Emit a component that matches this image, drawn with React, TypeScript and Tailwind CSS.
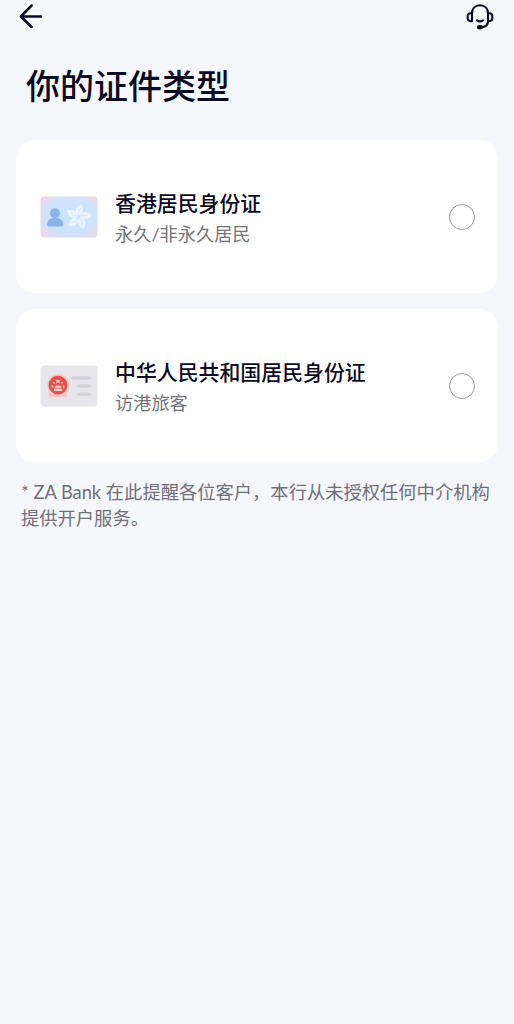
import React, { useState } from 'react';

interface DocumentType {
  id: string;
  title: string;
  subtitle: string;
  icon: React.ReactNode;
}

const BackIcon = () => (
  <svg className="w-6 h-6" viewBox="0 0 24 24" fill="none" stroke="#0b0b23" strokeWidth="2.5" strokeLinecap="round" strokeLinejoin="round">
    <path d="M12.6 1.5 L1.8 12.5 L12.6 23 M1.8 12.5 H22" />
  </svg>
);

const SupportIcon = () => (
  <svg className="w-7 h-7" viewBox="0 0 28 28" fill="none" stroke="#0b0b23" strokeWidth="2.1" strokeLinecap="round" strokeLinejoin="round">
    <path d="M6 18.3 V10.5 C6 5.5 9.2 2.2 14 2.2 S22 5.5 22 10.5 V18.3 C22 22 19.5 24.1 15.5 24.3" />
    <path d="M6 10.2 H4.8 C2.8 10.2 1.7 11.3 1.7 12.8 V15.6 C1.7 17.4 3 18.3 6 18.3 M22 10.2 H23.2 C25.2 10.2 26.3 11.3 26.3 12.8 V15.6 C26.3 17.4 25 18.3 22 18.3" />
    <path d="M11 17.4 Q14 19.4 17 17.4" />
    <ellipse cx="14" cy="24.3" rx="2" ry="1.2" fill="#0b0b23" />
  </svg>
);

const HongKongCard = () => (
  <svg className="w-[58px] h-[42px]" viewBox="0 0 58 42">
    <defs>
      <radialGradient id="hk-bg" cx="0.52" cy="0.5" r="0.68">
        <stop offset="0" stopColor="#cae5ff" />
        <stop offset="0.65" stopColor="#cfe2fd" />
        <stop offset="1" stopColor="#f6d6e5" />
      </radialGradient>
    </defs>
    <rect x="0.5" y="0.5" width="57" height="41" rx="3.5" fill="url(#hk-bg)" />
    <circle cx="15" cy="17.3" r="5" fill="#8bb5e9" />
    <path d="M7 28.4 C7 24.8 9.6 22.6 12.5 22 H17.7 C20.8 22.6 23.4 24.8 23.4 28.4 C23.4 29.8 22.3 30.4 21 30.4 H9.4 C8 30.4 7 29.8 7 28.4Z" fill="#8bb5e9" />
    {/* five bauhinia petals round the centre */}
    {[8, 80, 152, 224, 296].map((angle) => (
      <g key={angle} transform={`translate(38.5 20.8) rotate(${angle})`}>
        <path d="M0 -1.2 C-5 -3.5 -5.2 -9.8 1.8 -13.2 C1.2 -11 5 -8.8 3.2 -5 C2.4 -3 1 -2 0 -1.2Z" fill="#eaf4ff" />
        <path d="M0 -2 C-1.4 -4.5 -1 -6.5 0.8 -8.6" fill="none" stroke="#cce2fb" strokeWidth="0.7" />
      </g>
    ))}
  </svg>
);

const MainlandCard = () => (
  <svg className="w-[58px] h-[42px]" viewBox="0 0 58 42">
    <rect x="0.5" y="0.5" width="57" height="41" rx="3.5" fill="#e6e6ec" />
    <circle cx="18" cy="20" r="11" fill="#ffc5bd" />
    <path d="M9 25 L8.6 31 Q11 33.5 14 31.6 Q18 34 22 31.6 Q25 33.5 27.4 31 L27 25Z" fill="#ffc5bd" />
    <circle cx="18" cy="20.2" r="9.4" fill="#dc5451" />
    <g fill="#ffcfc5">
      <path d="M18 13.8 L18.8 15.6 L20.8 15.6 L19.2 16.8 L19.9 18.6 L18 17.5 L16.1 18.6 L16.8 16.8 L15.2 15.6 L17.2 15.6Z" />
      <circle cx="12.4" cy="21.4" r="1" />
      <circle cx="14" cy="17.8" r="0.9" />
      <circle cx="22" cy="17.8" r="0.9" />
      <circle cx="23.6" cy="21.4" r="1" />
      <path d="M16 20.4 H20 L21.4 22.8 H14.6Z M14.4 23.6 H21.6 L22.4 26 H13.6Z" />
    </g>
    <g stroke="#d3d3dd" strokeWidth="3.6" strokeLinecap="round">
      <path d="M33 13 H49.5 M38.8 21 H49.5 M38.8 29.2 H49.5" />
    </g>
  </svg>
);

const documentTypes: DocumentType[] = [
  { id: 'hk', title: '香港居民身份证', subtitle: '永久/非永久居民', icon: <HongKongCard /> },
  { id: 'cn', title: '中华人民共和国居民身份证', subtitle: '访港旅客', icon: <MainlandCard /> },
];

interface DocumentCardProps {
  item: DocumentType;
  selected: boolean;
  onSelect: (id: string) => void;
}

const DocumentCard: React.FC<DocumentCardProps> = ({ item, selected, onSelect }) => (
  <button
    onClick={() => onSelect(item.id)}
    className="flex items-center w-full h-[153px] pl-6 pr-[23px] rounded-[19px] bg-white text-left"
  >
    {item.icon}
    <div className="flex-1 ml-[17px] pt-1">
      <div className="text-[20.9px] leading-[31px] font-medium text-[#0b0b23]">{item.title}</div>
      <div className="text-[18.2px] leading-[33px] text-[#74747c]">{item.subtitle}</div>
    </div>
    <span className={`w-[26px] h-[26px] rounded-full border ${selected ? 'border-[#0b0b23] bg-[#0b0b23]' : 'border-[#99999c]'}`} />
  </button>
);

const App: React.FC = () => {
  const [selected, setSelected] = useState<string | null>(null);

  return (
    <div className="min-h-screen bg-[#f6f6fd] px-4 font-['Lato','Noto_Sans_CJK_SC',sans-serif]">
      <header className="flex justify-between items-start h-[58px] pl-[3px] pr-1 pt-[3px]">
        <button className="pt-px" title="返回">
          <BackIcon />
        </button>
        <button title="客服">
          <SupportIcon />
        </button>
      </header>

      <h1 className="h-[82px] pl-2.5 pt-px text-[34px] leading-[54px] font-medium text-[#0b0b23]">你的证件类型</h1>

      <div className="flex flex-col gap-4">
        {documentTypes.map((item) => (
          <DocumentCard key={item.id} item={item} selected={selected === item.id} onSelect={setSelected} />
        ))}
      </div>

      <p className="mt-[17px] pl-[5px] text-[18.3px] leading-[26px] text-[#70707b] whitespace-nowrap">
        * ZA Bank 在此提醒各位客户，本行从未授权任何中介机构
        <br />
        提供开户服务。
      </p>
    </div>
  );
};

export default App;
